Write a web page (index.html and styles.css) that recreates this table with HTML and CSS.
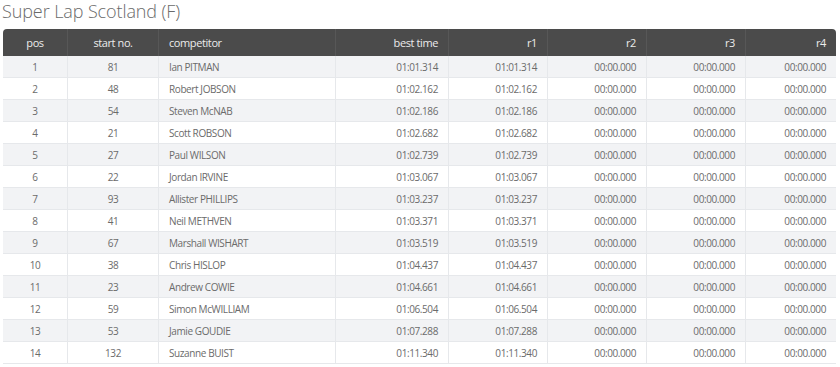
FILE: index.html
```html
<!DOCTYPE html>
<html>
<head>
    <title>Super Lap Scotland (F)</title>
    <link rel="stylesheet" href="styles.css">
</head>
<body>
    <h2 class="event-title">Super Lap Scotland (F)</h2>
    <table class="results">
        <thead>
            <tr>
                <th class="col-pos">pos</th>
                <th class="col-start">start no.</th>
                <th class="col-name">competitor</th>
                <th class="col-time">best time</th>
                <th class="col-run">r1</th>
                <th class="col-run">r2</th>
                <th class="col-run">r3</th>
                <th class="col-last">r4</th>
            </tr>
        </thead>
        <tbody>
            <tr><td>1</td><td>81</td><td>Ian PITMAN</td><td>01:01.314</td><td>01:01.314</td><td>00:00.000</td><td>00:00.000</td><td>00:00.000</td></tr>
            <tr><td>2</td><td>48</td><td>Robert JOBSON</td><td>01:02.162</td><td>01:02.162</td><td>00:00.000</td><td>00:00.000</td><td>00:00.000</td></tr>
            <tr><td>3</td><td>54</td><td>Steven McNAB</td><td>01:02.186</td><td>01:02.186</td><td>00:00.000</td><td>00:00.000</td><td>00:00.000</td></tr>
            <tr><td>4</td><td>21</td><td>Scott ROBSON</td><td>01:02.682</td><td>01:02.682</td><td>00:00.000</td><td>00:00.000</td><td>00:00.000</td></tr>
            <tr><td>5</td><td>27</td><td>Paul WILSON</td><td>01:02.739</td><td>01:02.739</td><td>00:00.000</td><td>00:00.000</td><td>00:00.000</td></tr>
            <tr><td>6</td><td>22</td><td>Jordan IRVINE</td><td>01:03.067</td><td>01:03.067</td><td>00:00.000</td><td>00:00.000</td><td>00:00.000</td></tr>
            <tr><td>7</td><td>93</td><td>Allister PHILLIPS</td><td>01:03.237</td><td>01:03.237</td><td>00:00.000</td><td>00:00.000</td><td>00:00.000</td></tr>
            <tr><td>8</td><td>41</td><td>Neil METHVEN</td><td>01:03.371</td><td>01:03.371</td><td>00:00.000</td><td>00:00.000</td><td>00:00.000</td></tr>
            <tr><td>9</td><td>67</td><td>Marshall WISHART</td><td>01:03.519</td><td>01:03.519</td><td>00:00.000</td><td>00:00.000</td><td>00:00.000</td></tr>
            <tr><td>10</td><td>38</td><td>Chris HISLOP</td><td>01:04.437</td><td>01:04.437</td><td>00:00.000</td><td>00:00.000</td><td>00:00.000</td></tr>
            <tr><td>11</td><td>23</td><td>Andrew COWIE</td><td>01:04.661</td><td>01:04.661</td><td>00:00.000</td><td>00:00.000</td><td>00:00.000</td></tr>
            <tr><td>12</td><td>59</td><td>Simon McWILLIAM</td><td>01:06.504</td><td>01:06.504</td><td>00:00.000</td><td>00:00.000</td><td>00:00.000</td></tr>
            <tr><td>13</td><td>53</td><td>Jamie GOUDIE</td><td>01:07.288</td><td>01:07.288</td><td>00:00.000</td><td>00:00.000</td><td>00:00.000</td></tr>
            <tr><td>14</td><td>132</td><td>Suzanne BUIST</td><td>01:11.340</td><td>01:11.340</td><td>00:00.000</td><td>00:00.000</td><td>00:00.000</td></tr>
        </tbody>
    </table>
</body>
</html>
```

FILE: styles.css
```css
* {
    margin: 0;
    padding: 0;
    box-sizing: border-box;
}

body {
    padding: 0 4px 0 3px;
    background: #fff;
    font-family: 'Open Sans', sans-serif;
    color: #666;
}

.event-title {
    font-size: 18px;
    font-weight: 300;
    color: #6a6a6a;
    line-height: 24px;
    margin: -1px 0 6px -1px;
    letter-spacing: -0.1px;
}

.results {
    width: 833px;
    border-collapse: separate;
    border-spacing: 0;
    table-layout: fixed;
    font-size: 10px;
    letter-spacing: -0.4px;
}

.results th {
    background: #4b4b4b;
    color: #ececec;
    font-weight: 400;
    font-size: 11px;
    height: 27px;
    padding: 0 10px;
    text-align: right;
    border-left: 1px solid #575757;
    letter-spacing: -0.4px;
}

.results th:first-child {
    border-left: none;
    border-top-left-radius: 4px;
}

.results th:last-child {
    border-top-right-radius: 4px;
}

.results .col-pos { width: 64px; text-align: center; }
.results .col-start { width: 91px; text-align: center; }
.results .col-name { width: 177px; text-align: left; }
.results .col-time { width: 113px; }
.results .col-run { width: 99px; }
.results .col-last { width: 91px; }

.results td {
    height: 22px;
    padding: 0 10px;
    text-align: right;
    border-left: 1px solid #e6e8eb;
    border-bottom: 1px solid #e6e8eb;
    color: #6b6b6b;
}

.results td:first-child {
    border-left: none;
}

.results td:nth-child(1),
.results td:nth-child(2) {
    text-align: center;
}

.results td:nth-child(3) {
    text-align: left;
}

.results tbody tr:nth-child(odd) td {
    background: #f2f3f5;
}
```
